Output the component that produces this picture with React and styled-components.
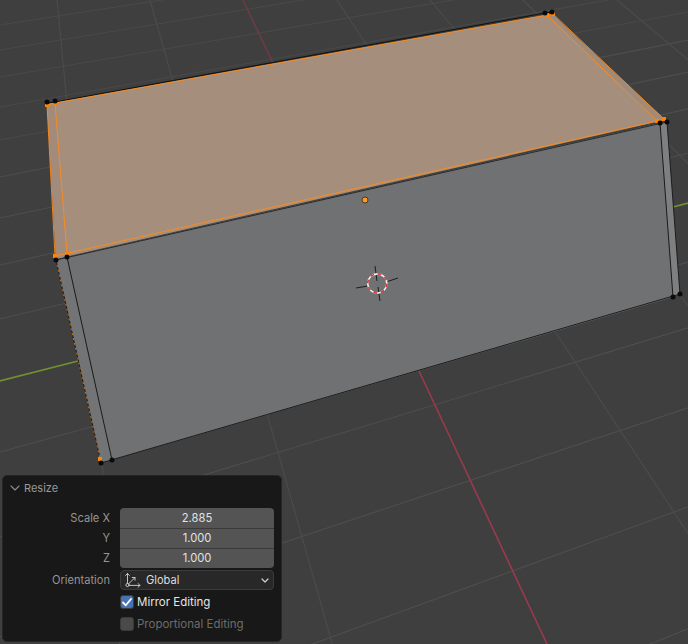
import React from "react";
import styled, { createGlobalStyle } from "styled-components";

const GlobalStyle = createGlobalStyle`
  html, body {
    margin: 0;
    padding: 0;
    background: #3f3f3f;
  }
`;

// floor grid: [y at x=0, slope] and [x at y=0, slope]
const ACROSS = [
  [25, -0.155], [50, -0.165], [77, -0.17], [107, -0.176], [140, -0.186], [177, -0.199],
  [218, -0.212], [265, -0.227], [319, -0.241], [452, -0.276], [537, -0.304], [637, -0.333],
  [758, -0.365], [904, -0.4],
];
const ALONG = [
  [57, 0.097], [150, 0.283], [337, 0.658], [430, 0.845], [523, 1.01], [617, 1.19],
];

const Viewport = () => (
  <Scene viewBox="0 0 688 644" width="688" height="644">
    {ACROSS.map(([y, m]) => (
      <line key={y} x1="0" y1={y} x2="688" y2={y + m * 688} stroke={y < 150 ? "#494949" : "#4e4e4e"} strokeWidth="1.1" />
    ))}
    {ALONG.map(([x, m]) => (
      <line key={x} x1={x} y1="0" x2={x + m * 644} y2="644" stroke="#4c4c4c" strokeWidth="1.1" />
    ))}
    <line x1="243" y1="0" x2="273" y2="63" stroke="#6d3b44" strokeWidth="1.6" />
    <line x1="419" y1="371" x2="547" y2="644" stroke="#9a3a4d" strokeWidth="1.6" />
    <line x1="0" y1="381" x2="78" y2="361" stroke="#6f9130" strokeWidth="1.7" />
    <line x1="673" y1="207" x2="688" y2="203" stroke="#6f9130" strokeWidth="1.7" />

    {/* top face */}
    <polygon points="47,104 552,14 665,120 56,259" fill="#a68e7c" />
    <polygon points="47,104 55,103 67,256 56,259" fill="#a28b7a" />
    <polygon points="547,15 552,14 665,120 658,122" fill="#a08a79" />

    {/* front and side faces */}
    <polygon points="67,257 660,123 673,297 112,460" fill="#6f7173" />
    <polygon points="56,260 67,257 112,460 101,463" fill="#727476" />
    <polygon points="660,123 667,122 680,294 673,297" fill="#7d7f81" />

    {/* black edges */}
    <polyline points="47,103 55,102 545,13 552,12" fill="none" stroke="#111" strokeWidth="1" />
    <line x1="56" y1="260" x2="667" y2="122" stroke="#2a2a2a" strokeWidth="1" />
    <line x1="67" y1="257" x2="112" y2="460" stroke="#1c1c1c" strokeWidth="1" />
    <line x1="660" y1="123" x2="673" y2="297" stroke="#1c1c1c" strokeWidth="1" />
    <line x1="667" y1="122" x2="680" y2="294" stroke="#1c1c1c" strokeWidth="1" />
    <line x1="101" y1="463" x2="680" y2="294" stroke="#1c1c1c" strokeWidth="1" />
    <line x1="56" y1="260" x2="101" y2="463" stroke="#1c1c1c" strokeWidth="1" />
    <line x1="56" y1="260" x2="101" y2="463" stroke="#c9751c" strokeWidth="1" strokeDasharray="2 3" />

    {/* selected edges */}
    <g fill="none" stroke="#ff8c19" strokeWidth="0.9">
      <line x1="47" y1="105" x2="55" y2="256" />
      <line x1="55" y1="103" x2="67" y2="254" />
      <line x1="47" y1="105" x2="55" y2="103" />
      <line x1="55" y1="103" x2="547" y2="15" />
      <line x1="547" y1="15" x2="553" y2="14" />
      <line x1="55" y1="256" x2="657" y2="121" />
      <line x1="547" y1="15" x2="657" y2="121" />
      <line x1="553" y1="14" x2="664" y2="119" />
      <line x1="657" y1="121" x2="664" y2="119" />
    </g>

    {/* vertices */}
    {[[47, 105], [55, 103], [547, 15], [553, 14], [657, 121], [664, 119], [55, 256], [67, 254], [100, 459]].map(([x, y]) => (
      <rect key={`o${x}`} x={x - 2} y={y - 2} width="4" height="4" fill="#ff8500" />
    ))}
    {[[47, 102], [55, 101], [545, 13], [552, 12], [660, 123], [667, 122], [56, 260], [67, 257], [101, 463], [112, 460], [673, 297], [680, 294]].map(([x, y]) => (
      <circle key={`b${x}`} cx={x} cy={y} r="2.5" fill="#0a0a0a" />
    ))}

    {/* median point */}
    <circle cx="365" cy="200" r="3" fill="#ff9a1e" stroke="#4a3a28" strokeWidth="1" />

    {/* 3d cursor */}
    <g stroke="#1e1e1e" strokeWidth="1">
      <line x1="356" y1="288" x2="368" y2="286" />
      <line x1="386" y1="282" x2="398" y2="278" />
      <line x1="375" y1="266" x2="377" y2="281" />
      <line x1="378" y1="287" x2="380" y2="301" />
    </g>
    <circle cx="377.3" cy="283.5" r="9.6" fill="none" stroke="#f4f4f4" strokeWidth="1.6" />
    <circle cx="377.3" cy="283.5" r="9.6" fill="none" stroke="#d23a3f" strokeWidth="1.6" strokeDasharray="3.77 3.77" />
  </Scene>
);

const OrientationIcon = () => (
  <svg viewBox="0 0 18 18" width="18" height="18" fill="none" stroke="#d2d2d2" strokeWidth="0.9" strokeLinecap="round" strokeLinejoin="round">
    <circle cx="3.5" cy="14" r="1.6" />
    <path d="M3.5 12.4V2.5M1.6 4.4l1.9-1.9 1.9 1.9" />
    <path d="M5.1 14.4H16M14 12.5l2 1.9-2 1.9" />
    <path d="M4.8 12.7 11 6.5M8.2 6.5H11V9.2" />
  </svg>
);

const App = () => (
  <Stage>
    <GlobalStyle />
    <Viewport />
    <Panel>
      <Header>
        <svg viewBox="0 0 10 6" width="10" height="6" fill="none" stroke="#8c8c8c" strokeWidth="1.1" strokeLinecap="round" strokeLinejoin="round">
          <path d="M1 1l4 4 4-4" />
        </svg>
        <Title>Resize</Title>
      </Header>
      <Form>
        <Group>
          <Row>
            <Label>Scale X</Label>
            <NumberField $first>2.885</NumberField>
          </Row>
          <Row>
            <Label>Y</Label>
            <NumberField>1.000</NumberField>
          </Row>
          <Row>
            <Label>Z</Label>
            <NumberField $last>1.000</NumberField>
          </Row>
        </Group>
        <Row>
          <Label>Orientation</Label>
          <Dropdown>
            <OrientationIcon />
            <DropdownText>Global</DropdownText>
            <svg viewBox="0 0 8 5" width="8" height="5" fill="none" stroke="#d0d0d0" strokeWidth="1.2" strokeLinecap="round" strokeLinejoin="round">
              <path d="M1 1l3 3 3-3" />
            </svg>
          </Dropdown>
        </Row>
        <Row>
          <span />
          <CheckRow>
            <CheckBox $checked>
              <svg viewBox="0 0 12 12" width="12" height="12" fill="none" stroke="#fff" strokeWidth="1.8" strokeLinecap="round" strokeLinejoin="round">
                <path d="M2 6.5l2.8 2.8L10 3" />
              </svg>
            </CheckBox>
            <CheckLabel>Mirror Editing</CheckLabel>
          </CheckRow>
        </Row>
        <Row>
          <span />
          <CheckRow>
            <CheckBox />
            <CheckLabel $disabled>Proportional Editing</CheckLabel>
          </CheckRow>
        </Row>
      </Form>
    </Panel>
  </Stage>
);

export default App;

const Stage = styled.div`
  position: relative;
  width: 688px;
  height: 644px;
  overflow: hidden;
  background: #3f3f3f;
  font-family: Inter, "Noto Sans", sans-serif;
  font-size: 11.5px;
`;

const Scene = styled.svg`
  display: block;
`;

const Panel = styled.div`
  position: absolute;
  left: 2px;
  top: 475px;
  width: 280px;
  height: 167px;
  box-sizing: border-box;
  padding: 0 7px;
  background: #181818;
  border: 1px solid #262626;
  border-radius: 5px;
`;

const Header = styled.div`
  display: flex;
  align-items: center;
  gap: 4px;
  height: 32px;
  padding: 0 0 8px 0;
  box-sizing: border-box;
`;

const Title = styled.span`
  color: #999;
  font-size: 11px;
`;

const Form = styled.div`
  display: flex;
  flex-direction: column;
  gap: 2px;
`;

const Group = styled.div`
  display: flex;
  flex-direction: column;
`;

const Row = styled.div`
  display: grid;
  grid-template-columns: 100px 154px;
  column-gap: 10px;
  height: 20px;
  align-items: center;
`;

const Label = styled.span`
  text-align: right;
  color: #959595;
  font-size: 11.1px;
`;

const NumberField = styled.div`
  height: 20px;
  box-sizing: border-box;
  display: flex;
  align-items: center;
  justify-content: center;
  padding-bottom: ${(p) => (p.$first ? "0" : "1px")};
  background: #545454;
  color: #e2e2e2;
  font-size: 11.2px;
  border-top: ${(p) => (p.$first ? "none" : "1px solid #3a3a3a")};
  border-radius: ${(p) => (p.$first ? "4px 4px 0 0" : p.$last ? "0 0 4px 4px" : "0")};
`;

const Dropdown = styled.div`
  height: 20px;
  box-sizing: border-box;
  display: flex;
  align-items: center;
  padding: 0 4px 0 3px;
  background: #282828;
  border: 1px solid #3c3c3c;
  border-radius: 4px;
`;

const DropdownText = styled.span`
  flex: 1;
  margin-left: 4px;
  color: #dcdcdc;
  font-size: 11.1px;
`;

const CheckRow = styled.div`
  display: flex;
  align-items: center;
  gap: 3px;
`;

const CheckBox = styled.div`
  width: 14px;
  height: 14px;
  box-sizing: border-box;
  display: flex;
  align-items: center;
  justify-content: center;
  background: ${(p) => (p.$checked ? "#4772b3" : "#4a4a4a")};
  border: 1px solid #3a3a3a;
  border-radius: 3px;
`;

const CheckLabel = styled.span`
  color: ${(p) => (p.$disabled ? "#6c6c6c" : "#e6e6e6")};
`;
